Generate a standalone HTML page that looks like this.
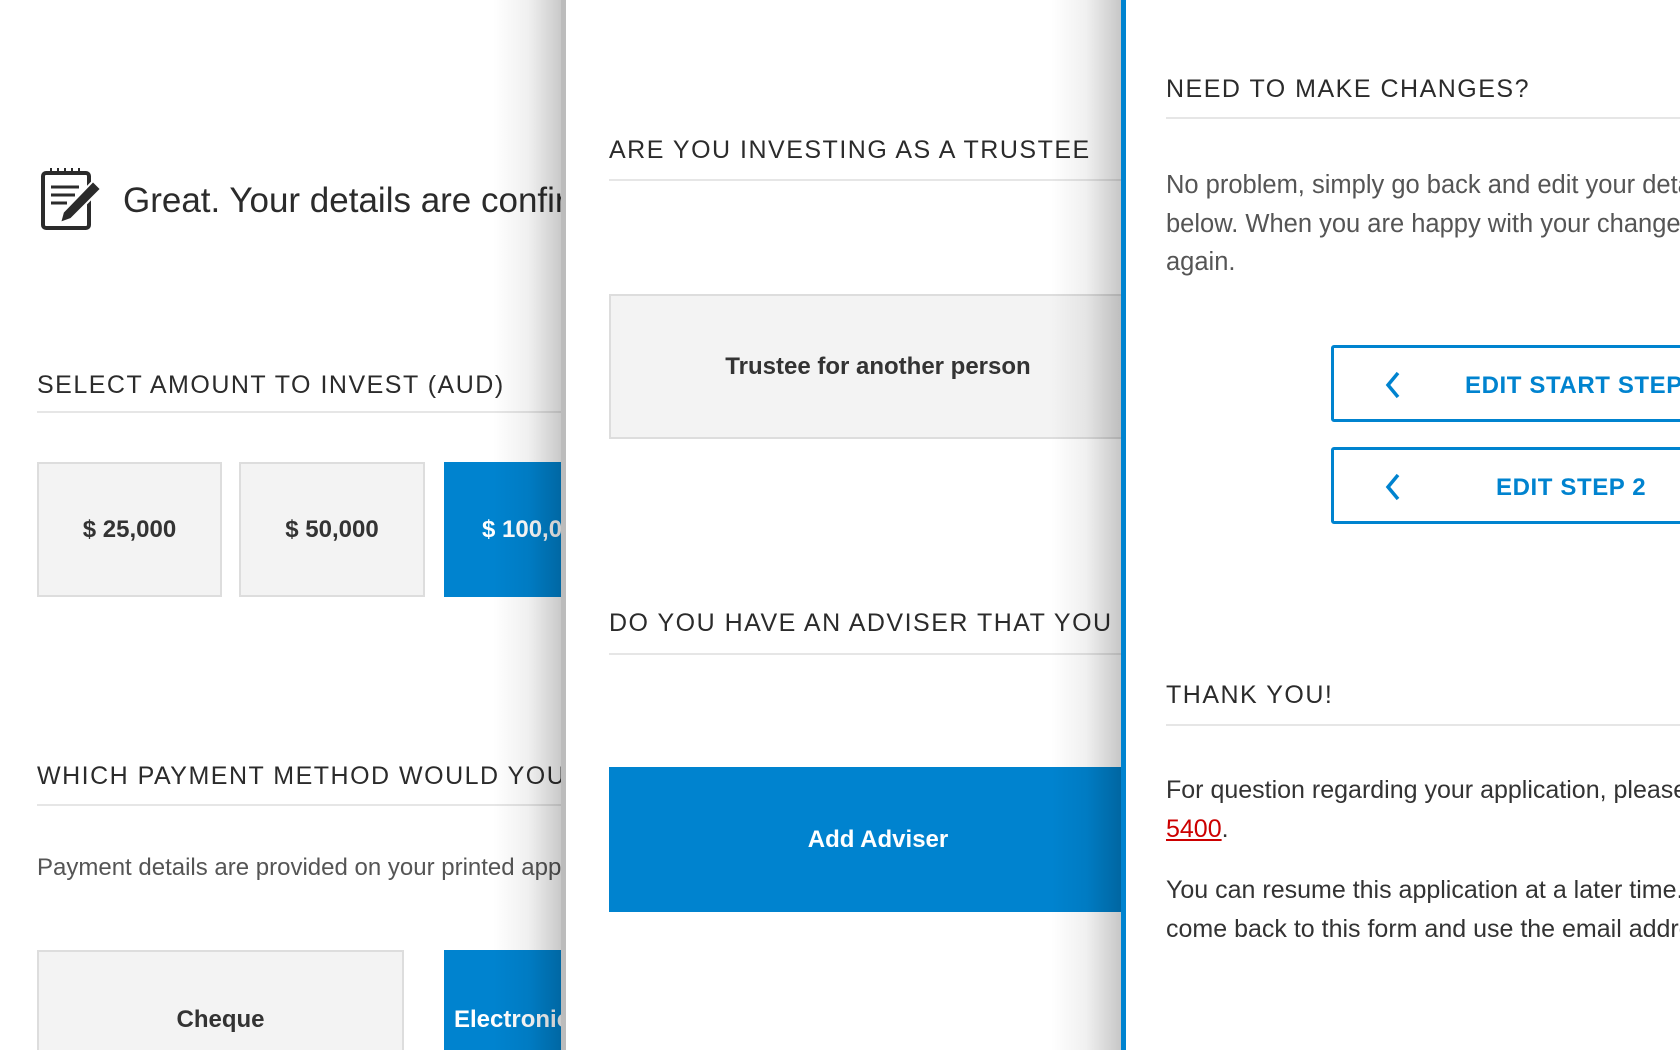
<!DOCTYPE html>
<html><head><meta charset="utf-8"><style>
*{margin:0;padding:0;box-sizing:border-box}
body{width:1680px;height:1050px;overflow:hidden;background:#fff;font-family:"Liberation Sans",sans-serif;color:#333;position:relative}
.p{position:absolute;top:0;height:1050px;overflow:hidden;background:#fff}
.a{position:absolute;white-space:nowrap}
.h{font-size:25px;letter-spacing:1.5px;color:#2b2b2b}
.ln{position:absolute;height:2px;background:#e6e6e6}
.box{position:absolute;background:#f3f3f3;border:2px solid #ddd;display:flex;align-items:center;justify-content:center;font-size:24px;font-weight:bold;color:#333}
.blue{background:#0083cf;border-color:#0083cf;color:#fff}
.sh{position:absolute;top:0;height:1050px;width:70px;background:linear-gradient(to right,rgba(0,0,0,0),rgba(0,0,0,0.06) 50%,rgba(0,0,0,0.22))}
.txt{font-size:25px;color:#555}
.btn{position:absolute;left:1331px;width:400px;border:3px solid #0083cf;border-radius:3px;color:#0083cf;font-size:24px;letter-spacing:0.6px;font-weight:bold}
</style></head><body>
<div class="p" style="left:0;width:563px">
 <svg class="a" style="left:41px;top:167px" width="64" height="64" viewBox="0 0 64 64"><rect x="2" y="6" width="46" height="55" rx="3" fill="none" stroke="#2b2b2b" stroke-width="4"/><g stroke="#2b2b2b" stroke-width="2"><line x1="10" y1="1" x2="10" y2="8"/><line x1="17" y1="1" x2="17" y2="8"/><line x1="24" y1="1" x2="24" y2="8"/><line x1="31" y1="1" x2="31" y2="8"/><line x1="38" y1="1" x2="38" y2="8"/></g><g stroke="#2b2b2b" stroke-width="3"><line x1="10" y1="20" x2="38" y2="20"/><line x1="10" y1="28" x2="34" y2="28"/><line x1="10" y1="36" x2="26" y2="36"/></g><path d="M52 14 L60 22 L30 52 L19 56 L22 45 Z" fill="#2b2b2b" stroke="#fff" stroke-width="2"/></svg>
 <div class="a" style="left:123px;top:181px;font-size:35px;color:#2b2b2b">Great. Your details are confirmed</div>
 <div class="a h" style="left:37px;top:371px">SELECT AMOUNT TO INVEST (AUD)</div>
 <div class="ln" style="left:37px;top:411px;width:530px"></div>
 <div class="box" style="left:37px;top:462px;width:185px;height:135px">$ 25,000</div>
 <div class="box" style="left:239px;top:462px;width:186px;height:135px">$ 50,000</div>
 <div class="box blue" style="left:444px;top:462px;width:186px;height:135px;justify-content:flex-start;padding-left:36px">$ 100,000</div>
 <div class="a h" style="left:37px;top:762px">WHICH PAYMENT METHOD WOULD YOU</div>
 <div class="ln" style="left:37px;top:804px;width:530px"></div>
 <div class="a txt" style="left:37px;top:854px;font-size:24px">Payment details are provided on your printed application</div>
 <div class="box" style="left:37px;top:950px;width:367px;height:140px">Cheque</div>
 <div class="box blue" style="left:444px;top:950px;width:200px;height:140px;justify-content:flex-start;padding-left:8px">Electronic</div>
 <div class="sh" style="left:493px"></div>
</div>
<div style="position:absolute;left:561px;top:0;width:5px;height:1050px;background:#bcbcbc"></div>
<div class="p" style="left:566px;width:555px">
 <div class="a h" style="left:43px;top:136px">ARE YOU INVESTING AS A TRUSTEE</div>
 <div class="ln" style="left:43px;top:179px;width:520px"></div>
 <div class="box" style="left:43px;top:294px;width:530px;height:145px;padding-left:8px">Trustee for another person</div>
 <div class="a h" style="left:43px;top:609px">DO YOU HAVE AN ADVISER THAT YOU</div>
 <div class="ln" style="left:43px;top:653px;width:520px"></div>
 <div class="box blue" style="left:43px;top:767px;width:530px;height:145px;padding-left:8px">Add Adviser</div>
 <div class="sh" style="left:485px"></div>
</div>
<div style="position:absolute;left:1121px;top:0;width:5px;height:1050px;background:#0083cf"></div>
<div class="p" style="left:1126px;width:554px">
 <div class="a h" style="left:40px;top:75px">NEED TO MAKE CHANGES?</div>
 <div class="ln" style="left:40px;top:117px;width:520px"></div>
 <div class="a txt" style="left:40px;top:166px;line-height:38.5px;font-size:25.5px">No problem, simply go back and edit your details<br>below. When you are happy with your changes, submit<br>again.</div>
 <div class="a h" style="left:40px;top:681px">THANK YOU!</div>
 <div class="ln" style="left:40px;top:724px;width:520px"></div>
 <div class="a txt" style="left:40px;top:771px;line-height:38.5px;color:#333">For question regarding your application, please call 1300<br><span style="color:#c00;text-decoration:underline">5400</span>.</div>
 <div class="a txt" style="left:40px;top:871px;line-height:38.5px;color:#333">You can resume this application at a later time. Simply<br>come back to this form and use the email address</div>
</div>
<div class="btn" style="top:345px;height:77px"><svg class="a" style="left:50px;top:22px" width="20" height="30" viewBox="0 0 20 30"><path d="M14 3 L4 15 L14 27" fill="none" stroke="#0083cf" stroke-width="3.5"/></svg><div class="a" style="left:131px;top:24px">EDIT START STEP</div></div>
<div class="btn" style="top:447px;height:77px"><svg class="a" style="left:50px;top:22px" width="20" height="30" viewBox="0 0 20 30"><path d="M14 3 L4 15 L14 27" fill="none" stroke="#0083cf" stroke-width="3.5"/></svg><div class="a" style="left:162px;top:24px">EDIT STEP 2</div></div>
</body></html>
